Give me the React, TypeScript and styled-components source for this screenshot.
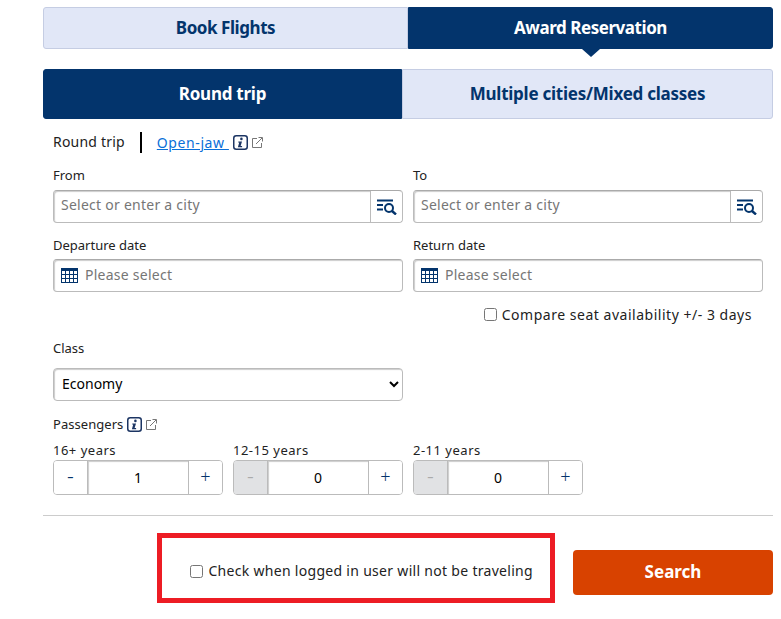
import styled, {createGlobalStyle} from "styled-components";

const NAVY = "#03346c";
const PALE = "#e1e7f7";
const EDGE = "#c5cde3";
const FONT = `"Noto Sans", "DejaVu Sans", sans-serif`;

const GlobalStyle = createGlobalStyle`
  html, body {
    margin: 0;
    padding: 0;
    background: #fff;
  }
  body {
    font-family: ${FONT};
    font-size: 13px;
    color: #222;
  }
  * {
    box-sizing: border-box;
  }
`;

const InfoIcon = () => (
  <svg width="15" height="15" viewBox="0 0 15 15">
    <rect x="0.75" y="0.75" width="13.5" height="13.5" rx="2.5" fill="#fff" stroke="#1c3563" strokeWidth="1.5"/>
    <circle cx="8.4" cy="3.9" r="1.3" fill="#1c3563"/>
    <path d="M5.4 6.4h3.6l-1.4 4.6h1.5v1.2H4.9l1.3-4.6H5.1z" fill="#1c3563"/>
  </svg>
);

const ExternalIcon = () => (
  <svg width="11" height="11" viewBox="0 0 11 11" fill="none" stroke="#777" strokeWidth="1">
    <path d="M5 1.5H.5v9h9V6"/>
    <path d="M4 7l6-6M6.5.5h4v4"/>
  </svg>
);

const ListSearchIcon = () => (
  <svg width="22" height="16" viewBox="0 0 22 16" fill="none" stroke={NAVY}>
    <path d="M1 1.5h16M1 6h6M1 10.5h6" strokeWidth="2"/>
    <circle cx="13" cy="9" r="4" strokeWidth="2"/>
    <path d="M16 12l4 3.5" strokeWidth="2.4"/>
  </svg>
);

const CalendarIcon = () => (
  <svg width="17" height="15" viewBox="0 0 17 15" fill="none" stroke={NAVY}>
    <rect x="0.5" y="0.5" width="16" height="14" fill="#fff"/>
    <path d="M0 1.5h17" strokeWidth="3"/>
    <path d="M0 6.5h17M0 10.5h17M4.5 0v15M8.5 0v15M12.5 0v15"/>
  </svg>
);

const CityField = ({label}: {label: string}) => (
  <Field>
    <CityLabel>{label}</CityLabel>
    <InputShell>
      <TextInput placeholder="Select or enter a city"/>
      <LookupButton><ListSearchIcon/></LookupButton>
    </InputShell>
  </Field>
);

const DateField = ({label}: {label: string}) => (
  <Field>
    <FieldLabel>{label}</FieldLabel>
    <DateShell>
      <CalendarIcon/>
      <TextInput $flush placeholder="Please select"/>
    </DateShell>
  </Field>
);

const Stepper = ({label, value, locked}: {label: string; value: number; locked?: boolean}) => (
  <div>
    <AgeLabel>{label}</AgeLabel>
    <StepperBox>
      <StepButton $minus $locked={locked}>-</StepButton>
      <StepValue>{value}</StepValue>
      <StepButton>+</StepButton>
    </StepperBox>
  </div>
);

const App = () => {
  return (
    <Page>
      <GlobalStyle/>
      <TopTabs>
        <TopTab>Book Flights</TopTab>
        <TopTab $active $arrow>Award Reservation</TopTab>
      </TopTabs>
      <TripTabs>
        <TripTab $active>Round trip</TripTab>
        <TripTab>Multiple cities/Mixed classes</TripTab>
      </TripTabs>
      <Form>
        <TripTypeRow>
          <TripType>Round trip</TripType>
          <OpenJaw href="#">Open-jaw </OpenJaw>
          <InfoIcon/>
          <ExternalIcon/>
        </TripTypeRow>
        <TwoCols>
          <CityField label="From"/>
          <CityField label="To"/>
          <DateField label="Departure date"/>
          <DateField label="Return date"/>
        </TwoCols>
        <CompareRow>
          <Check type="checkbox"/>
          Compare seat availability +/- 3 days
        </CompareRow>
        <ClassField>
          <ClassLabel>Class</ClassLabel>
          <ClassSelect defaultValue="Economy">
            <option>Economy</option>
            <option>Premium Economy</option>
            <option>Business</option>
          </ClassSelect>
        </ClassField>
        <PassengersRow>
          Passengers
          <InfoIcon/>
          <ExternalIcon/>
        </PassengersRow>
        <Steppers>
          <Stepper label="16+ years" value={1}/>
          <Stepper label="12-15 years" value={0} locked/>
          <Stepper label="2-11 years" value={0} locked/>
        </Steppers>
      </Form>
      <Divider/>
      <Footer>
        <Highlight>
          <Check type="checkbox"/>
          Check when logged in user will not be traveling
        </Highlight>
        <SearchButton>Search</SearchButton>
      </Footer>
    </Page>
  );
};

export default App;

const Page = styled.div`
  width: 730px;
  margin-left: 43px;
  padding-top: 7px;
`;

const TopTabs = styled.div`
  display: flex;
  height: 42px;
`;

const TopTab = styled.div<{$active?: boolean; $arrow?: boolean}>`
  position: relative;
  display: flex;
  align-items: center;
  justify-content: center;
  flex: 0 0 365px;
  padding-bottom: 2px;
  font-size: 17px;
  font-weight: 700;
  letter-spacing: -0.45px;
  color: ${p => p.$active ? "#fff" : NAVY};
  background: ${p => p.$active ? NAVY : PALE};
  border: 1px solid ${p => p.$active ? NAVY : EDGE};
  border-radius: ${p => p.$active ? "0 3px 3px 0" : "3px 0 0 3px"};

  &::after {
    content: "";
    display: ${p => p.$arrow ? "block" : "none"};
    position: absolute;
    left: 50%;
    bottom: -9px;
    margin-left: -9px;
    border-left: 9px solid transparent;
    border-right: 9px solid transparent;
    border-top: 8px solid ${NAVY};
  }
`;

const TripTabs = styled.div`
  display: flex;
  height: 50px;
  margin-top: 20px;
`;

const TripTab = styled.div<{$active?: boolean}>`
  display: flex;
  align-items: center;
  justify-content: center;
  flex: ${p => p.$active ? "0 0 359px" : "1"};
  padding-bottom: 2px;
  font-size: 17px;
  font-weight: 700;
  letter-spacing: -0.25px;
  color: ${p => p.$active ? "#fff" : NAVY};
  background: ${p => p.$active ? NAVY : PALE};
  border: 1px solid ${p => p.$active ? NAVY : EDGE};
  border-radius: ${p => p.$active ? "3px 0 0 3px" : "0 3px 3px 0"};
`;

const Form = styled.div`
  padding: 0 10px;
`;

const TripTypeRow = styled.div`
  display: flex;
  align-items: center;
  gap: 4px;
  height: 24px;
  margin-top: 11px;
  font-size: 14px;
`;

const TripType = styled.span`
  height: 21px;
  line-height: 19px;
  padding-right: 15px;
  margin-right: 11px;
  border-right: 2px solid #000;
  letter-spacing: 0.2px;
`;

const OpenJaw = styled.a`
  color: #0a6fd8;
  text-decoration: underline;
  white-space: pre;
  letter-spacing: 0.6px;
`;

const TwoCols = styled.div`
  display: grid;
  grid-template-columns: 350px 350px;
  column-gap: 10px;
  row-gap: 14px;
  margin-top: 13px;
`;

const Field = styled.div`
  display: flex;
  flex-direction: column;
`;

const FieldLabel = styled.label`
  height: 22px;
  line-height: 17px;
  font-size: 13px;
`;

const CityLabel = styled(FieldLabel)`
  height: 23px;
`;

const InputShell = styled.div`
  display: flex;
  height: 33px;
  border: 1px solid #bbb;
  border-top-color: #aaa;
  border-radius: 4px;
  box-shadow: inset 1px 1px 1px #ccc;
`;

const DateShell = styled(InputShell)`
  align-items: center;
  gap: 7px;
  padding-left: 7px;
`;

const TextInput = styled.input<{$flush?: boolean}>`
  flex: 1;
  min-width: 0;
  height: 100%;
  padding: 0 0 ${p => p.$flush ? 2 : 4}px ${p => p.$flush ? 0 : 7}px;
  border: 0;
  outline: 0;
  background: transparent;
  font-family: ${FONT};
  font-size: 14px;
  letter-spacing: 0.25px;

  &::placeholder {
    color: #767676;
    opacity: 1;
  }
`;

const LookupButton = styled.div`
  display: flex;
  align-items: center;
  justify-content: center;
  flex: 0 0 32px;
  padding-top: 1px;
  background: #fff;
  border-left: 1px solid #bbb;
  border-radius: 0 4px 4px 0;
`;

const CompareRow = styled.label`
  display: flex;
  align-items: center;
  justify-content: flex-end;
  height: 20px;
  margin-top: 12px;
  padding-right: 11px;
  font-size: 14px;
  letter-spacing: 0.52px;
`;

const Check = styled.input`
  width: 13px;
  height: 13px;
  margin: 1px 5px 0 0;
`;

const ClassField = styled.div`
  width: 350px;
  margin-top: 16px;
`;

const ClassLabel = styled(FieldLabel)`
  display: block;
  height: 28px;
`;

const ClassSelect = styled.select`
  display: block;
  width: 100%;
  height: 33px;
  padding: 0 4px 2px;
  background: #fff;
  border: 1px solid #bbb;
  border-radius: 4px;
  box-shadow: inset 1px 1px 1px #ccc;
  font-family: ${FONT};
  font-size: 14px;
  color: #000;
`;

const PassengersRow = styled.div`
  display: flex;
  align-items: center;
  gap: 4px;
  height: 20px;
  margin-top: 13px;
  font-size: 13px;
  letter-spacing: 0.05px;
`;

const Steppers = styled.div`
  display: flex;
  gap: 10px;
  margin-top: 8px;
`;

const AgeLabel = styled.div`
  height: 18px;
  line-height: 17px;
  font-size: 13px;
  letter-spacing: 0.5px;
`;

const StepperBox = styled.div`
  display: flex;
  width: 170px;
  height: 35px;
  overflow: hidden;
  border: 1px solid #bbb;
  border-radius: 4px;
`;

const StepButton = styled.div<{$locked?: boolean; $minus?: boolean}>`
  display: flex;
  align-items: center;
  justify-content: center;
  flex: 0 0 33px;
  padding-bottom: 3px;
  font-size: ${p => p.$minus ? 21 : 18}px;
  font-weight: 300;
  color: ${p => p.$locked ? "#aaa" : NAVY};
  background: ${p => p.$locked ? "#e1e2e4" : "#fff"};
`;

const StepValue = styled.div`
  display: flex;
  align-items: center;
  justify-content: center;
  flex: 1;
  padding-bottom: 1px;
  font-size: 14px;
  color: #000;
  border-left: 1px solid #bbb;
  border-right: 1px solid #bbb;
  box-shadow: inset 1px 1px 1px #ccc;
`;

const Divider = styled.hr`
  height: 1px;
  margin: 20px 0 0;
  background: #ccc;
  border: 0;
`;

const Footer = styled.div`
  display: flex;
  justify-content: flex-end;
  align-items: flex-start;
  gap: 18px;
  margin-top: 17px;
`;

const Highlight = styled.label`
  display: flex;
  align-items: center;
  justify-content: flex-end;
  width: 398px;
  height: 70px;
  padding: 5px 17px 0 0;
  border: 5px solid #ed1c24;
  font-size: 14px;
  letter-spacing: 0.3px;
`;

const SearchButton = styled.button`
  flex: 0 0 200px;
  height: 45px;
  margin-top: 17px;
  padding: 0 0 2px;
  color: #fff;
  background: #d84200;
  border: 0;
  border-radius: 4px;
  font-family: ${FONT};
  font-size: 17px;
  font-weight: 700;
`;
